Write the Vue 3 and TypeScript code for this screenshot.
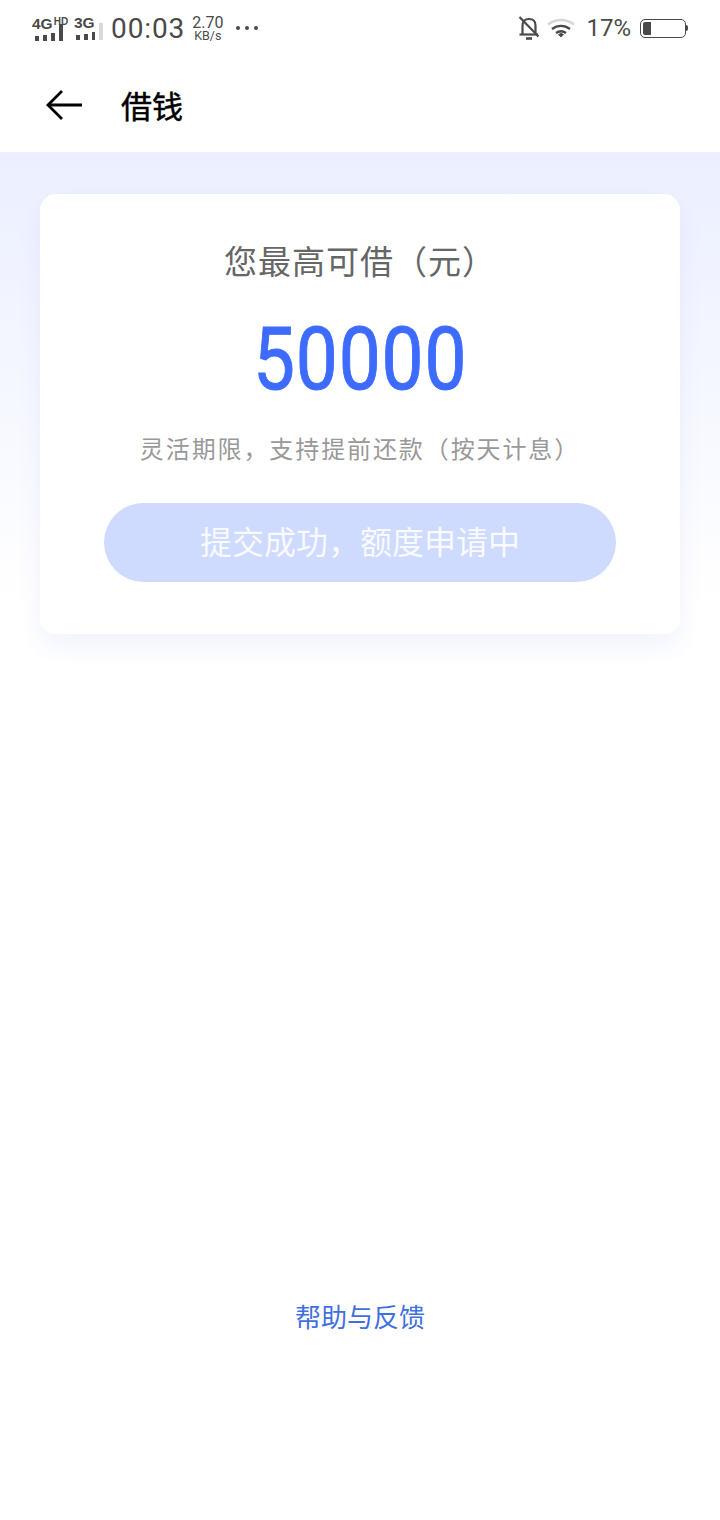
<template>
  <main class="page">
    <div class="status-bar">
      <div class="status-left">
        <div class="net">
          <div class="net-label">4G<small>HD</small></div>
          <div class="bars">
            <i v-for="(h, i) in bars" :key="i" :style="{ height: h + 'px' }"></i>
          </div>
        </div>
        <div class="net net-3g">
          <div class="net-label">3G</div>
          <div class="bars">
            <i v-for="(h, i) in bars" :key="i" :class="{ off: i === 3 }" :style="{ height: h + 'px' }"></i>
          </div>
        </div>
        <span class="clock">00:03</span>
        <div class="speed">
          <span class="speed-num">2.70</span>
          <span class="speed-unit">KB/s</span>
        </div>
        <div class="dots"><i></i><i></i><i></i></div>
      </div>
      <div class="status-right">
        <svg class="bell" width="22" height="24" viewBox="0 0 22 24" fill="none" stroke="#4a4a4a" stroke-width="2.2">
          <path d="M4.5 18.5V9.5C4.5 5.5 7 3 11 3S17.5 5.5 17.5 9.5V18.5" />
          <path d="M1.5 18.5H20" />
          <path d="M1.5 1L20.5 20.5" />
          <path d="M8 22.5H14" stroke-width="2.6" />
        </svg>
        <svg class="wifi" width="28" height="20" viewBox="0 0 28 20" fill="none" stroke-width="2.4">
          <path d="M1 6.5C8.5 .5 19.5 .5 27 6.5" stroke="#d6d6d6" />
          <path d="M5 11C10.5 6.8 17.5 6.8 23 11" stroke="#4a4a4a" />
          <path d="M9 15C12 12.8 16 12.8 19 15" stroke="#4a4a4a" />
          <path d="M11 16.5L14 14.8 17 16.5 14 19.6Z" fill="#4a4a4a" stroke="none" />
        </svg>
        <span class="percent">17%</span>
        <div class="battery"><div class="battery-level"></div></div>
        <div class="battery-tip"></div>
      </div>
    </div>

    <header class="nav">
      <svg class="back" width="38" height="32" viewBox="0 0 38 32" fill="none" stroke="#000" stroke-width="2.8">
        <path d="M17 2L3 16 17 30" />
        <path d="M3 16H37" />
      </svg>
      <h1 class="nav-title">借钱</h1>
    </header>

    <section class="hero">
      <div class="card">
        <h2 class="card-title">您最高可借（元）</h2>
        <div class="amount">{{ amount }}</div>
        <p class="note">灵活期限，支持提前还款（按天计息）</p>
        <button class="submit" type="button">提交成功，额度申请中</button>
      </div>
    </section>

    <a class="help">帮助与反馈</a>
  </main>
</template>

<script setup lang="ts">
const amount = 50000;
const bars: number[] = [5, 6, 8, 17];
</script>

<style>
html,
body {
  margin: 0;
  background: #fff;
}
</style>

<style scoped>
.page {
  width: 720px;
  height: 1520px;
  overflow: hidden;
  background: #fff;
  font-family: "Noto Sans CJK SC", "Liberation Sans", sans-serif;
  display: flex;
  flex-direction: column;
}

.status-bar {
  height: 56px;
  padding: 12px 32px 0;
  box-sizing: border-box;
  display: flex;
  justify-content: space-between;
  align-items: flex-start;
  color: #4a4a4a;
  font-family: Roboto, sans-serif;
}

.status-left,
.status-right {
  display: flex;
  align-items: center;
  height: 32px;
}

.net {
  width: 34px;
}

.net-3g {
  width: 29px;
  margin-left: 8px;
}

.net-label {
  font-family: "Liberation Sans", sans-serif;
  font-size: 15.5px;
  font-weight: 700;
  line-height: 14px;
  white-space: nowrap;
}

.net-label small {
  font-size: 10px;
  vertical-align: 4px;
  margin-left: 1px;
}

.bars {
  display: flex;
  align-items: flex-end;
  gap: 4px;
  height: 17px;
  margin: -7px 0 0 3px;
}

.bars i {
  width: 4px;
  background: #4a4a4a;
}

.net-3g .bars {
  margin-left: 2px;
}

.bars i.off {
  background: #d8d8d8;
}

.clock {
  margin-left: 8px;
  font-size: 28px;
  letter-spacing: 0.9px;
}

.speed {
  margin: 2px 0 0 7px;
  display: flex;
  flex-direction: column;
  align-items: center;
  line-height: 13px;
}

.speed-num {
  font-size: 16px;
}

.speed-unit {
  font-size: 12.5px;
}

.dots {
  margin-left: 13px;
  display: flex;
  gap: 5px;
}

.dots i {
  width: 4px;
  height: 4px;
  border-radius: 50%;
  background: #4a4a4a;
}

.wifi {
  margin-left: 7px;
}

.percent {
  margin-left: 11px;
  font-size: 24px;
}

.battery {
  margin-left: 9px;
  width: 46px;
  height: 19px;
  box-sizing: border-box;
  border: 1.5px solid #4a4a4a;
  border-radius: 5px;
  padding: 2px;
}

.battery-level {
  width: 8px;
  height: 100%;
  background: #4a4a4a;
  border-radius: 2px 0 0 2px;
}

.battery-tip {
  width: 2px;
  height: 6px;
  background: #4a4a4a;
  border-radius: 0 2px 2px 0;
}

.nav {
  height: 96px;
  display: flex;
  align-items: center;
  padding: 0 0 0 45px;
  box-sizing: border-box;
}

.back {
  margin-top: 2px;
}

.nav-title {
  margin: 0 0 0 38px;
  font-size: 31px;
  font-weight: 400;
  -webkit-text-stroke: 0.5px #000;
  color: #000;
}

.hero {
  padding: 42px 40px 0;
  background: linear-gradient(180deg, #ebefff 0%, #ffffff 84%);
  height: 540px;
  box-sizing: border-box;
}

.card {
  height: 440px;
  background: #fff;
  border-radius: 16px;
  box-shadow: 0 12px 24px rgba(60, 90, 220, 0.07);
  display: flex;
  flex-direction: column;
  align-items: center;
}

.card-title {
  margin: 42px 0 0;
  font-size: 33px;
  line-height: 48px;
  font-weight: 400;
  letter-spacing: 1px;
  color: #666;
}

.amount {
  margin-top: 20px;
  font-family: Roboto, sans-serif;
  font-size: 88px;
  line-height: 110px;
  font-weight: 400;
  -webkit-text-stroke: 1px #3d6bff;
  letter-spacing: 1px;
  color: #3d6bff;
  transform: scaleX(0.85);
}

.note {
  margin: 16px 0 0;
  font-size: 24px;
  line-height: 36px;
  letter-spacing: 1.9px;
  color: #999;
}

.submit {
  margin-top: 37px;
  width: 512px;
  height: 79px;
  padding: 0 0 5px;
  border: none;
  border-radius: 40px;
  background: #cedafe;
  color: rgba(255, 255, 255, 0.88);
  font-family: inherit;
  font-size: 32px;
}

.help {
  margin-top: 605px;
  text-align: center;
  font-size: 26px;
  line-height: 38px;
  color: #3f6fe0;
}
</style>
